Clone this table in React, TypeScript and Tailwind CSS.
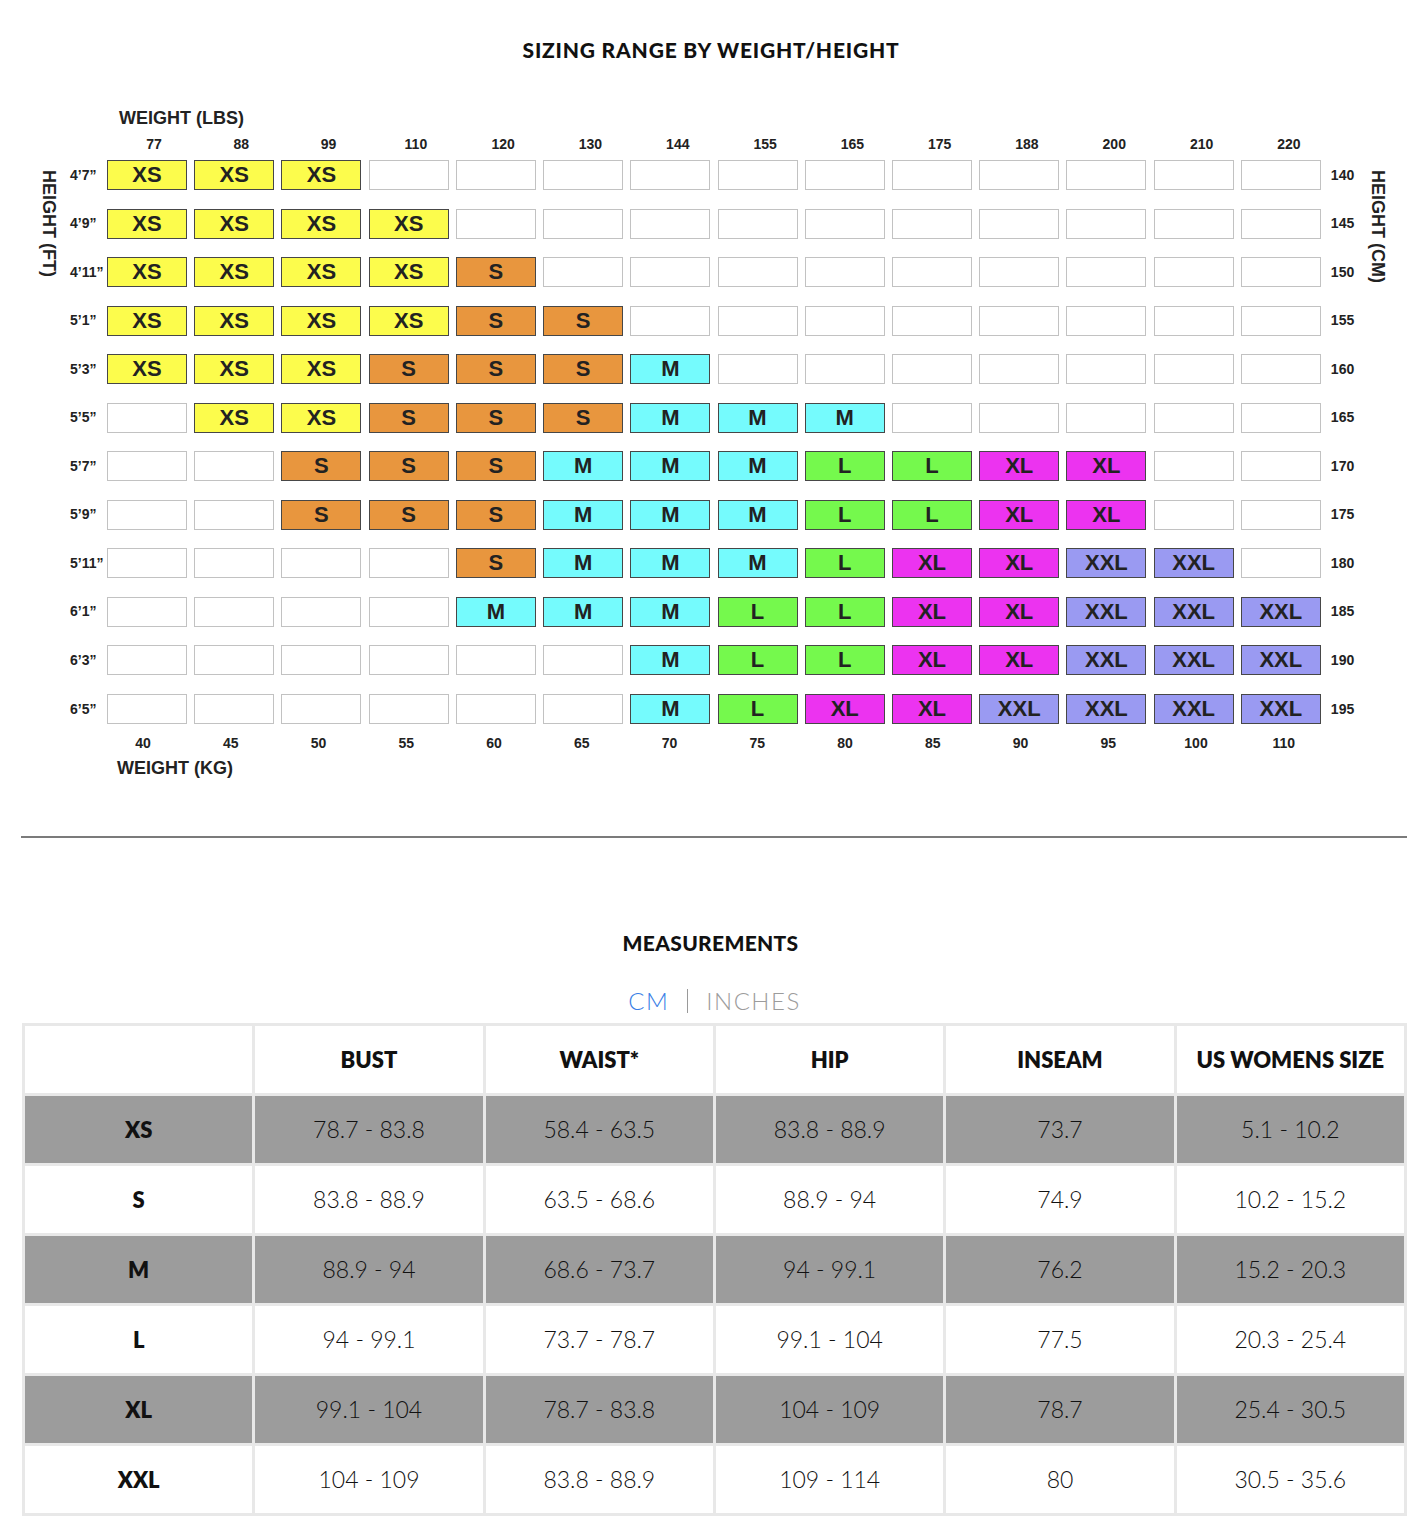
const lbs = ["77", "88", "99", "110", "120", "130", "144", "155", "165", "175", "188", "200", "210", "220"];
const kg = ["40", "45", "50", "55", "60", "65", "70", "75", "80", "85", "90", "95", "100", "110"];

// each row: ft label, cm label, 14 cells ("" = empty)
const chartRows: { ft: string; cm: string; cells: string[] }[] = [
  { ft: "4’7”", cm: "140", cells: ["XS", "XS", "XS", "", "", "", "", "", "", "", "", "", "", ""] },
  { ft: "4’9”", cm: "145", cells: ["XS", "XS", "XS", "XS", "", "", "", "", "", "", "", "", "", ""] },
  { ft: "4’11”", cm: "150", cells: ["XS", "XS", "XS", "XS", "S", "", "", "", "", "", "", "", "", ""] },
  { ft: "5’1”", cm: "155", cells: ["XS", "XS", "XS", "XS", "S", "S", "", "", "", "", "", "", "", ""] },
  { ft: "5’3”", cm: "160", cells: ["XS", "XS", "XS", "S", "S", "S", "M", "", "", "", "", "", "", ""] },
  { ft: "5’5”", cm: "165", cells: ["", "XS", "XS", "S", "S", "S", "M", "M", "M", "", "", "", "", ""] },
  { ft: "5’7”", cm: "170", cells: ["", "", "S", "S", "S", "M", "M", "M", "L", "L", "XL", "XL", "", ""] },
  { ft: "5’9”", cm: "175", cells: ["", "", "S", "S", "S", "M", "M", "M", "L", "L", "XL", "XL", "", ""] },
  { ft: "5’11”", cm: "180", cells: ["", "", "", "", "S", "M", "M", "M", "L", "XL", "XL", "XXL", "XXL", ""] },
  { ft: "6’1”", cm: "185", cells: ["", "", "", "", "M", "M", "M", "L", "L", "XL", "XL", "XXL", "XXL", "XXL"] },
  { ft: "6’3”", cm: "190", cells: ["", "", "", "", "", "", "M", "L", "L", "XL", "XL", "XXL", "XXL", "XXL"] },
  { ft: "6’5”", cm: "195", cells: ["", "", "", "", "", "", "M", "L", "XL", "XL", "XXL", "XXL", "XXL", "XXL"] },
];

const sizeColors: Record<string, string> = {
  "": "bg-white border-[#c2c2c2]",
  XS: "bg-[#fcfc4c] border-[#474747]",
  S: "bg-[#e8963e] border-[#474747]",
  M: "bg-[#75fbfd] border-[#474747]",
  L: "bg-[#75f94d] border-[#474747]",
  XL: "bg-[#ec33f0] border-[#474747]",
  XXL: "bg-[#9a9af2] border-[#474747]",
};

const measurements = [
  { size: "XS", values: ["78.7 - 83.8", "58.4 - 63.5", "83.8 - 88.9", "73.7", "5.1 - 10.2"] },
  { size: "S", values: ["83.8 - 88.9", "63.5 - 68.6", "88.9 - 94", "74.9", "10.2 - 15.2"] },
  { size: "M", values: ["88.9 - 94", "68.6 - 73.7", "94 - 99.1", "76.2", "15.2 - 20.3"] },
  { size: "L", values: ["94 - 99.1", "73.7 - 78.7", "99.1 - 104", "77.5", "20.3 - 25.4"] },
  { size: "XL", values: ["99.1 - 104", "78.7 - 83.8", "104 - 109", "78.7", "25.4 - 30.5"] },
  { size: "XXL", values: ["104 - 109", "83.8 - 88.9", "109 - 114", "80", "30.5 - 35.6"] },
];

const headers = ["", "BUST", "WAIST*", "HIP", "INSEAM", "US WOMENS SIZE"];

function SizingChart() {
  return (
    <div className="font-['Liberation_Sans',Arial,sans-serif] font-bold text-[#222]">
      <div className="pl-[119px] mt-[46px] h-[20px] text-[18px] leading-[20px]">WEIGHT (LBS)</div>

      {/* lbs labels */}
      <div className="ml-[107px] mt-[8px] grid grid-cols-[repeat(14,80px)] gap-x-[7.3px]">
        {lbs.map((l) => (
          <div key={l} className="pl-[14px] text-center text-[14px] leading-[16px]">{l}</div>
        ))}
      </div>

      <div className="mt-[8px] flex">
        <div className="ml-[40px] w-[18px] pt-[10px]">
          <div className="[writing-mode:vertical-rl] text-[18px] leading-[18px] whitespace-nowrap">HEIGHT (FT)</div>
        </div>
        <div className="ml-[12px] w-[37px] grid grid-rows-[repeat(12,30px)] gap-y-[18.55px]">
          {chartRows.map((r) => (
            <div key={r.ft} className="flex items-center text-[14px] whitespace-nowrap">{r.ft}</div>
          ))}
        </div>
        <div className="grid grid-cols-[repeat(14,80px)] grid-rows-[repeat(12,30px)] gap-x-[7.23px] gap-y-[18.55px]">
          {chartRows.map((r) =>
            r.cells.map((c, i) => (
              <div
                key={r.ft + i}
                className={`flex items-center justify-center border-[1.5px] text-[22px] leading-none ${sizeColors[c]}`}
              >
                {c}
              </div>
            ))
          )}
        </div>
        <div className="ml-[10px] w-[30px] grid grid-rows-[repeat(12,30px)] gap-y-[18.55px]">
          {chartRows.map((r) => (
            <div key={r.cm} className="flex items-center text-[14px]">{r.cm}</div>
          ))}
        </div>
        <div className="ml-[8px] w-[18px] pt-[10px]">
          <div className="[writing-mode:vertical-rl] text-[18px] leading-[18px] whitespace-nowrap">HEIGHT (CM)</div>
        </div>
      </div>

      {/* kg labels */}
      <div className="ml-[107px] mt-[11px] grid grid-cols-[repeat(14,80px)] gap-x-[7.75px]">
        {kg.map((k) => (
          <div key={k} className="pr-[8px] text-center text-[14px] leading-[16px]">{k}</div>
        ))}
      </div>
      <div className="pl-[117px] mt-[7px] h-[20px] text-[18px] leading-[20px]">WEIGHT (KG)</div>
    </div>
  );
}

export default function App() {
  return (
    <div className="w-[1414px] bg-white pb-[17px] font-['Lato',sans-serif] text-[#111]">
      <h1 className="pt-[38px] pl-[8px] h-[62px] text-center text-[21px] leading-[24px] font-black tracking-[0.8px]">
        SIZING RANGE BY WEIGHT/HEIGHT
      </h1>

      <SizingChart />

      <div className="ml-[21px] mr-[7px] mt-[58px] h-[2px] bg-[#7b7b7b]" />

      <div className="ml-[22px] mr-[7px]">
        <h2 className="mt-[93px] pr-[8px] text-center text-[21px] leading-[24px] font-black tracking-[0.3px]">MEASUREMENTS</h2>

        <div className="mt-[32px] flex h-[28px] items-center justify-center text-[24px] font-light tracking-[1.5px]">
          <span className="text-[#3b7fe6]">CM</span>
          <span className="mx-[18px] h-[24px] w-px bg-[#9a9a9a]" />
          <span className="text-[#9c9c9c]">INCHES</span>
        </div>

        <div className="mt-[8px] grid grid-cols-6 gap-[3px] bg-[#e8e8e8] p-[3px]">
          {headers.map((h, i) => (
            <div key={i} className="flex h-[67px] items-center justify-center bg-white text-[22px] font-extrabold text-[#111]">
              {h}
            </div>
          ))}
          {measurements.map((row, ri) => {
            const bg = ri % 2 === 0 ? "bg-[#9c9c9c]" : "bg-white";
            return [
              <div key={row.size} className={`flex h-[67px] items-center justify-center text-[22px] font-extrabold text-[#111] ${bg}`}>
                {row.size}
              </div>,
              ...row.values.map((v, vi) => (
                <div key={row.size + vi} className={`flex h-[67px] items-center justify-center text-[23px] font-light text-[#111] ${bg}`}>
                  {v}
                </div>
              )),
            ];
          })}
        </div>
      </div>
    </div>
  );
}
